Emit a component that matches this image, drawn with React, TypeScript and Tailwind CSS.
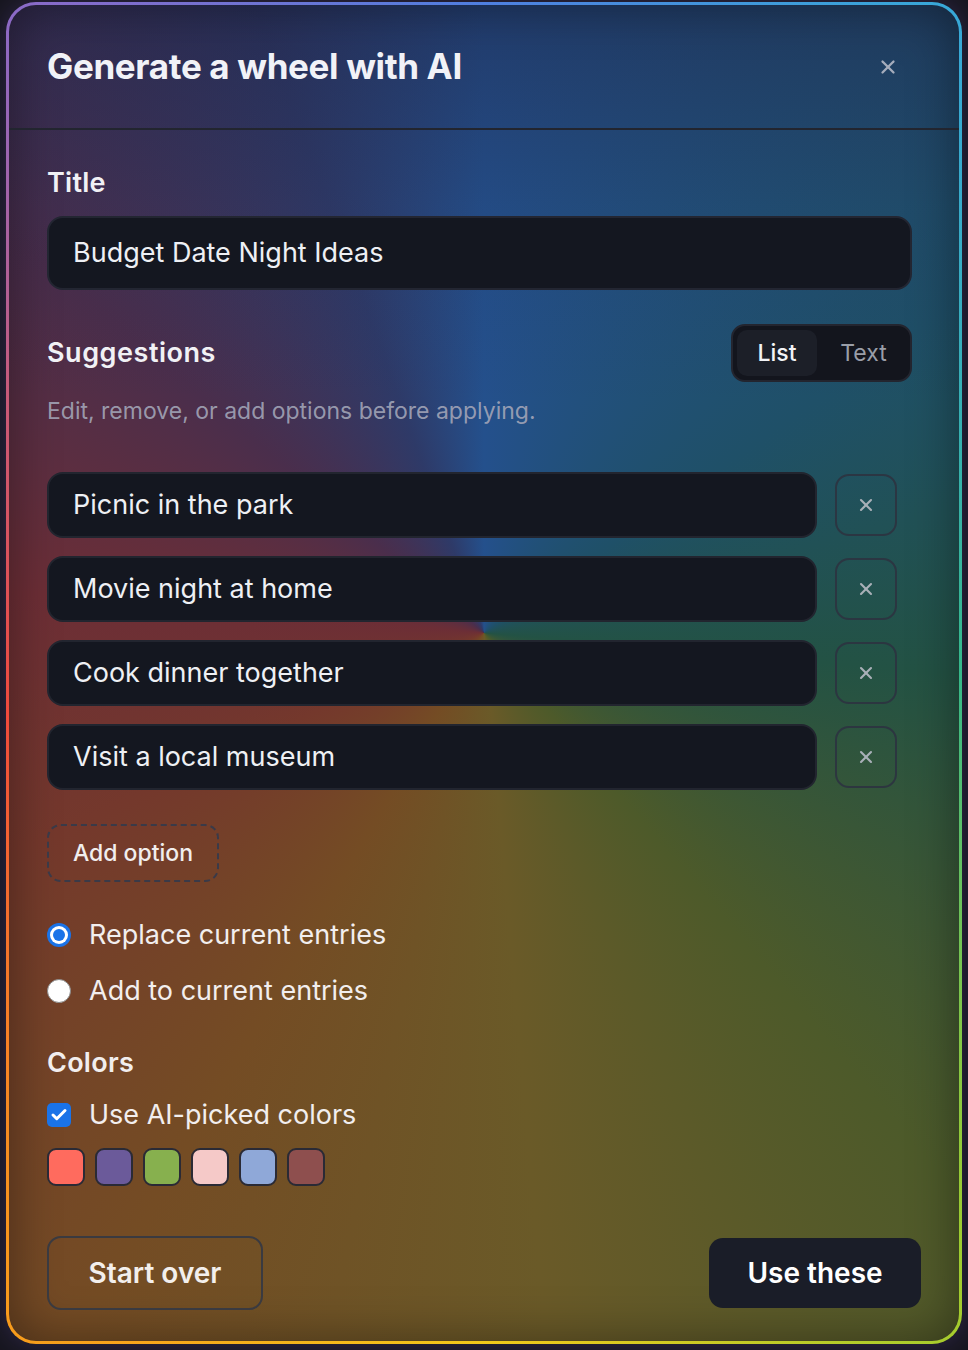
import { X, Check } from "lucide-react";

const suggestions = [
  "Picnic in the park",
  "Movie night at home",
  "Cook dinner together",
  "Visit a local museum",
];

const swatches = ["#ff6b5e", "#6b5a9a", "#87b04e", "#f5c9c8", "#8fa8d8", "#8e4f4e"];

function Radio({ checked, label }: { checked: boolean; label: string }) {
  return (
    <div className="flex items-center h-9 gap-[18px]">
      {checked ? (
        <span className="w-6 h-6 rounded-full bg-[#1a73e8] flex items-center justify-center">
          <span className="w-[18px] h-[18px] rounded-full bg-white flex items-center justify-center">
            <span className="w-3 h-3 rounded-full bg-[#1a73e8]" />
          </span>
        </span>
      ) : (
        <span className="w-6 h-6 rounded-full bg-white border border-[#8a8a8a]" />
      )}
      <span className="text-[27px] text-[#f2eeee] leading-9">{label}</span>
    </div>
  );
}

export default function App() {
  return (
    <div
      className="w-[968px] h-[1350px] bg-[#17161f] pt-[2px] pl-[6px]"
      style={{ fontFamily: "Inter, 'Noto Sans', sans-serif" }}
    >
      {/* Gradient border */}
      <div className="w-[956px] h-[1342px] rounded-[30px] p-[3px] [background-image:conic-gradient(from_0deg_at_50%_50%,#4f7fe0,#38a8d8_35deg,#35b88a_90deg,#9ccc30_140deg,#f2c81a_180deg,#f8961c_220deg,#f04a3c_265deg,#c85a78_300deg,#8a6ac8_325deg,#4f7fe0)] shadow-[0_0_24px_rgba(120,90,200,0.25)]">
        <div className="h-full rounded-[27px] overflow-hidden flex flex-col shadow-[inset_0_0_50px_rgba(0,0,0,0.4)] [background-image:linear-gradient(180deg,rgba(30,28,58,0.4)_0%,rgba(30,28,58,0.1)_15%,rgba(0,0,0,0)_30%),conic-gradient(from_0deg_at_50%_47%,#24508c,#1f5068_55deg,#235244_95deg,#4d5a2a_140deg,#6a5a28_175deg,#744c24_210deg,#74382c_245deg,#6c2e36_275deg,#4a2e4c_310deg,#2e3a68_340deg,#24508c)]">
          {/* Header */}
          <div className="h-[125px] shrink-0 flex items-center justify-between pl-[38px] pr-[60px] border-b-2 border-[#22252f]">
            <h1 className="text-[35px] font-bold tracking-[-0.01em] text-[#f1f2f7]">
              Generate a wheel with AI
            </h1>
            <X size={22} strokeWidth={2.5} className="text-[#a6adbc]" />
          </div>

          {/* Body */}
          <div className="flex flex-col pl-[38px] pr-[47px]">
            <label className="mt-[37px] text-[27px] leading-8 font-semibold tracking-[0.01em] text-[#f1f1f5]">
              Title
            </label>
            <div className="mt-[17px] h-[74px] rounded-2xl bg-[#141720] border-2 border-[#232632] flex items-center px-6">
              <span className="text-[27px] text-[#eef0f4]">Budget Date Night Ideas</span>
            </div>

            <div className="mt-[34px] h-[58px] flex items-center justify-between">
              <span className="text-[27px] font-semibold tracking-[0.02em] text-[#f1f1f5]">Suggestions</span>
              <div className="h-[58px] w-[181px] rounded-[14px] bg-[#13151d] border-2 border-[#23252f] flex items-center p-1 gap-1">
                <span className="h-full w-[80px] rounded-[10px] bg-[#1c1f28] flex items-center justify-center text-[23px] font-medium text-[#f2f3f6]">
                  List
                </span>
                <span className="flex-1 h-full flex items-center justify-center text-[23px] text-[#9a9ea8]">
                  Text
                </span>
              </div>
            </div>

            <p className="mt-[14px] text-[23px] leading-[30px] text-[#a3a6b8]/90">
              Edit, remove, or add options before applying.
            </p>

            <div className="mt-[46px] flex flex-col gap-[18px]">
              {suggestions.map((s) => (
                <div key={s} className="flex items-center gap-[18px]">
                  <div className="h-[66px] flex-1 rounded-2xl bg-[#141720] border-2 border-[#22252f] flex items-center px-6">
                    <span className="text-[27px] text-[#eef0f4]">{s}</span>
                  </div>
                  <div className="w-[62px] h-[62px] mr-[15px] rounded-[14px] border-2 border-[#2c3340]/90 flex items-center justify-center">
                    <X size={20} strokeWidth={2.5} className="text-[#a9b0b8]" />
                  </div>
                </div>
              ))}
            </div>

            <div className="mt-[34px] h-[58px] w-[172px] rounded-[14px] border-2 border-dashed border-[#3a3a48] flex items-center justify-center">
              <span className="text-[23px] font-medium text-[#f1eeee]">Add option</span>
            </div>

            <div className="mt-[35px] flex flex-col gap-5">
              <Radio checked label="Replace current entries" />
              <Radio checked={false} label="Add to current entries" />
            </div>

            <span className="mt-[38px] text-[27px] leading-8 font-semibold tracking-[0.01em] text-[#f2eeee]">
              Colors
            </span>

            <div className="mt-[18px] h-9 flex items-center gap-[18px]">
              <span className="w-6 h-6 rounded-[5px] bg-[#1a73e8] flex items-center justify-center">
                <Check size={18} strokeWidth={4} className="text-white" />
              </span>
              <span className="text-[27px] text-[#f2eeee] leading-9">Use AI-picked colors</span>
            </div>

            <div className="mt-[15px] flex gap-[10px]">
              {swatches.map((c) => (
                <span
                  key={c}
                  className="w-[38px] h-[38px] rounded-[9px] border-2 border-[#2a2a35]"
                  style={{ backgroundColor: c }}
                />
              ))}
            </div>
          </div>

          {/* Footer */}
          <div className="mt-[50px] flex items-center justify-between pl-[38px] pr-[38px]">
            <button className="h-[74px] w-[216px] rounded-[14px] border-2 border-[#3a3a40] text-[28px] font-semibold text-[#f3efec]">
              Start over
            </button>
            <button className="h-[70px] w-[212px] rounded-[14px] bg-[#1a1d28] text-[28px] font-semibold text-white">
              Use these
            </button>
          </div>
        </div>
      </div>
    </div>
  );
}
